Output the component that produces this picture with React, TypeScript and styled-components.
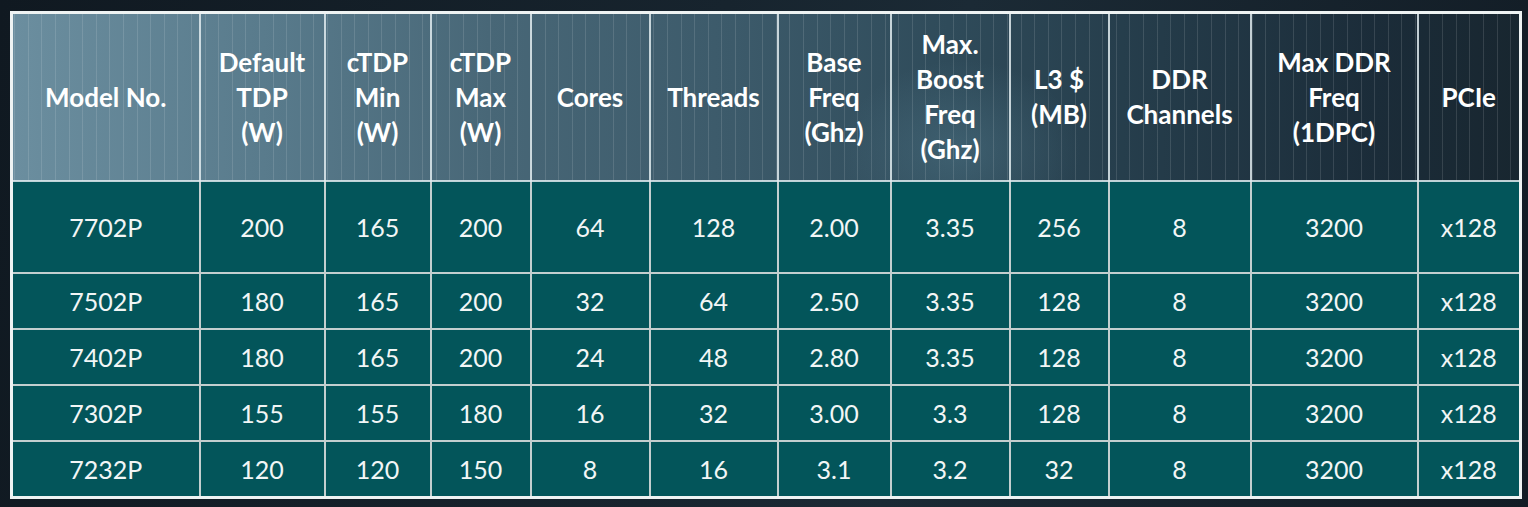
import React from "react";
import styled, { createGlobalStyle } from "styled-components";

const Global = createGlobalStyle`
  html, body { margin: 0; padding: 0; }
  body {
    width: 1528px;
    height: 507px;
    overflow: hidden;
    background: linear-gradient(100deg, #101921 0%, #17242e 45%, #1b2a35 60%, #121c25 100%);
    font-family: Lato, "Open Sans", sans-serif;
  }
`;

const Page = styled.div`
  padding: 11px 0 0 10px;
`;

const Table = styled.table`
  border-collapse: collapse;
  table-layout: fixed;
  width: 1509px;
  border: 3px solid #eef3f3;
`;

const HeadCell = styled.th`
  height: 166px;
  padding: 0;
  border: 2px solid rgba(225, 235, 238, 0.85);
  border-top: 3px solid #eef3f3;
  color: #ffffff;
  font-weight: 700;
  font-size: 26px;
  line-height: 35px;
  text-align: center;
  vertical-align: middle;
  background-attachment: fixed;
  background-image:
    repeating-linear-gradient(90deg, rgba(255, 255, 255, 0.12) 0 1px, transparent 1px 13.6px),
    radial-gradient(ellipse 120px 90px at 960px 150px, rgba(110, 160, 180, 0.25), transparent 100%),
    linear-gradient(90deg, #6c8fa0 0%, #587a8b 18%, #486777 32%, #3c5a6a 48%, #2f4b5a 62%, #243b49 76%, #1b2c39 90%, #18262f 100%);
`;

const Cell = styled.td<{ $tall?: boolean }>`
  height: ${(p) => (p.$tall ? 90 : 54)}px;
  padding: 0;
  border: 2px solid #c3cfcf;
  background: #03555a;
  color: #f2f6f6;
  font-size: 25px;
  font-weight: 400;
  text-align: center;
  vertical-align: middle;
`;

const widths = [188, 125, 106, 100, 119, 128, 113, 119, 99, 142, 167, 103];

const headers: string[][] = [
  ["Model No."],
  ["Default", "TDP", "(W)"],
  ["cTDP", "Min", "(W)"],
  ["cTDP", "Max", "(W)"],
  ["Cores"],
  ["Threads"],
  ["Base", "Freq", "(Ghz)"],
  ["Max.", "Boost", "Freq", "(Ghz)"],
  ["L3 $", "(MB)"],
  ["DDR", "Channels"],
  ["Max DDR", "Freq", "(1DPC)"],
  ["PCIe"],
];

const rows: string[][] = [
  ["7702P", "200", "165", "200", "64", "128", "2.00", "3.35", "256", "8", "3200", "x128"],
  ["7502P", "180", "165", "200", "32", "64", "2.50", "3.35", "128", "8", "3200", "x128"],
  ["7402P", "180", "165", "200", "24", "48", "2.80", "3.35", "128", "8", "3200", "x128"],
  ["7302P", "155", "155", "180", "16", "32", "3.00", "3.3", "128", "8", "3200", "x128"],
  ["7232P", "120", "120", "150", "8", "16", "3.1", "3.2", "32", "8", "3200", "x128"],
];

const Line = styled.span`
  display: block;
  white-space: nowrap;
`;

export default function App() {
  return (
    <>
      <Global />
      <Page>
        <Table>
          <colgroup>
            {widths.map((w, i) => (
              <col key={i} style={{ width: w }} />
            ))}
          </colgroup>
          <thead>
            <tr>
              {headers.map((h, i) => (
                <HeadCell key={i}>
                  {h.map((l, j) => (
                    <Line key={j}>{l}</Line>
                  ))}
                </HeadCell>
              ))}
            </tr>
          </thead>
          <tbody>
            {rows.map((r, i) => (
              <tr key={i}>
                {r.map((c, j) => (
                  <Cell key={j} $tall={i === 0}>
                    {c}
                  </Cell>
                ))}
              </tr>
            ))}
          </tbody>
        </Table>
      </Page>
    </>
  );
}
